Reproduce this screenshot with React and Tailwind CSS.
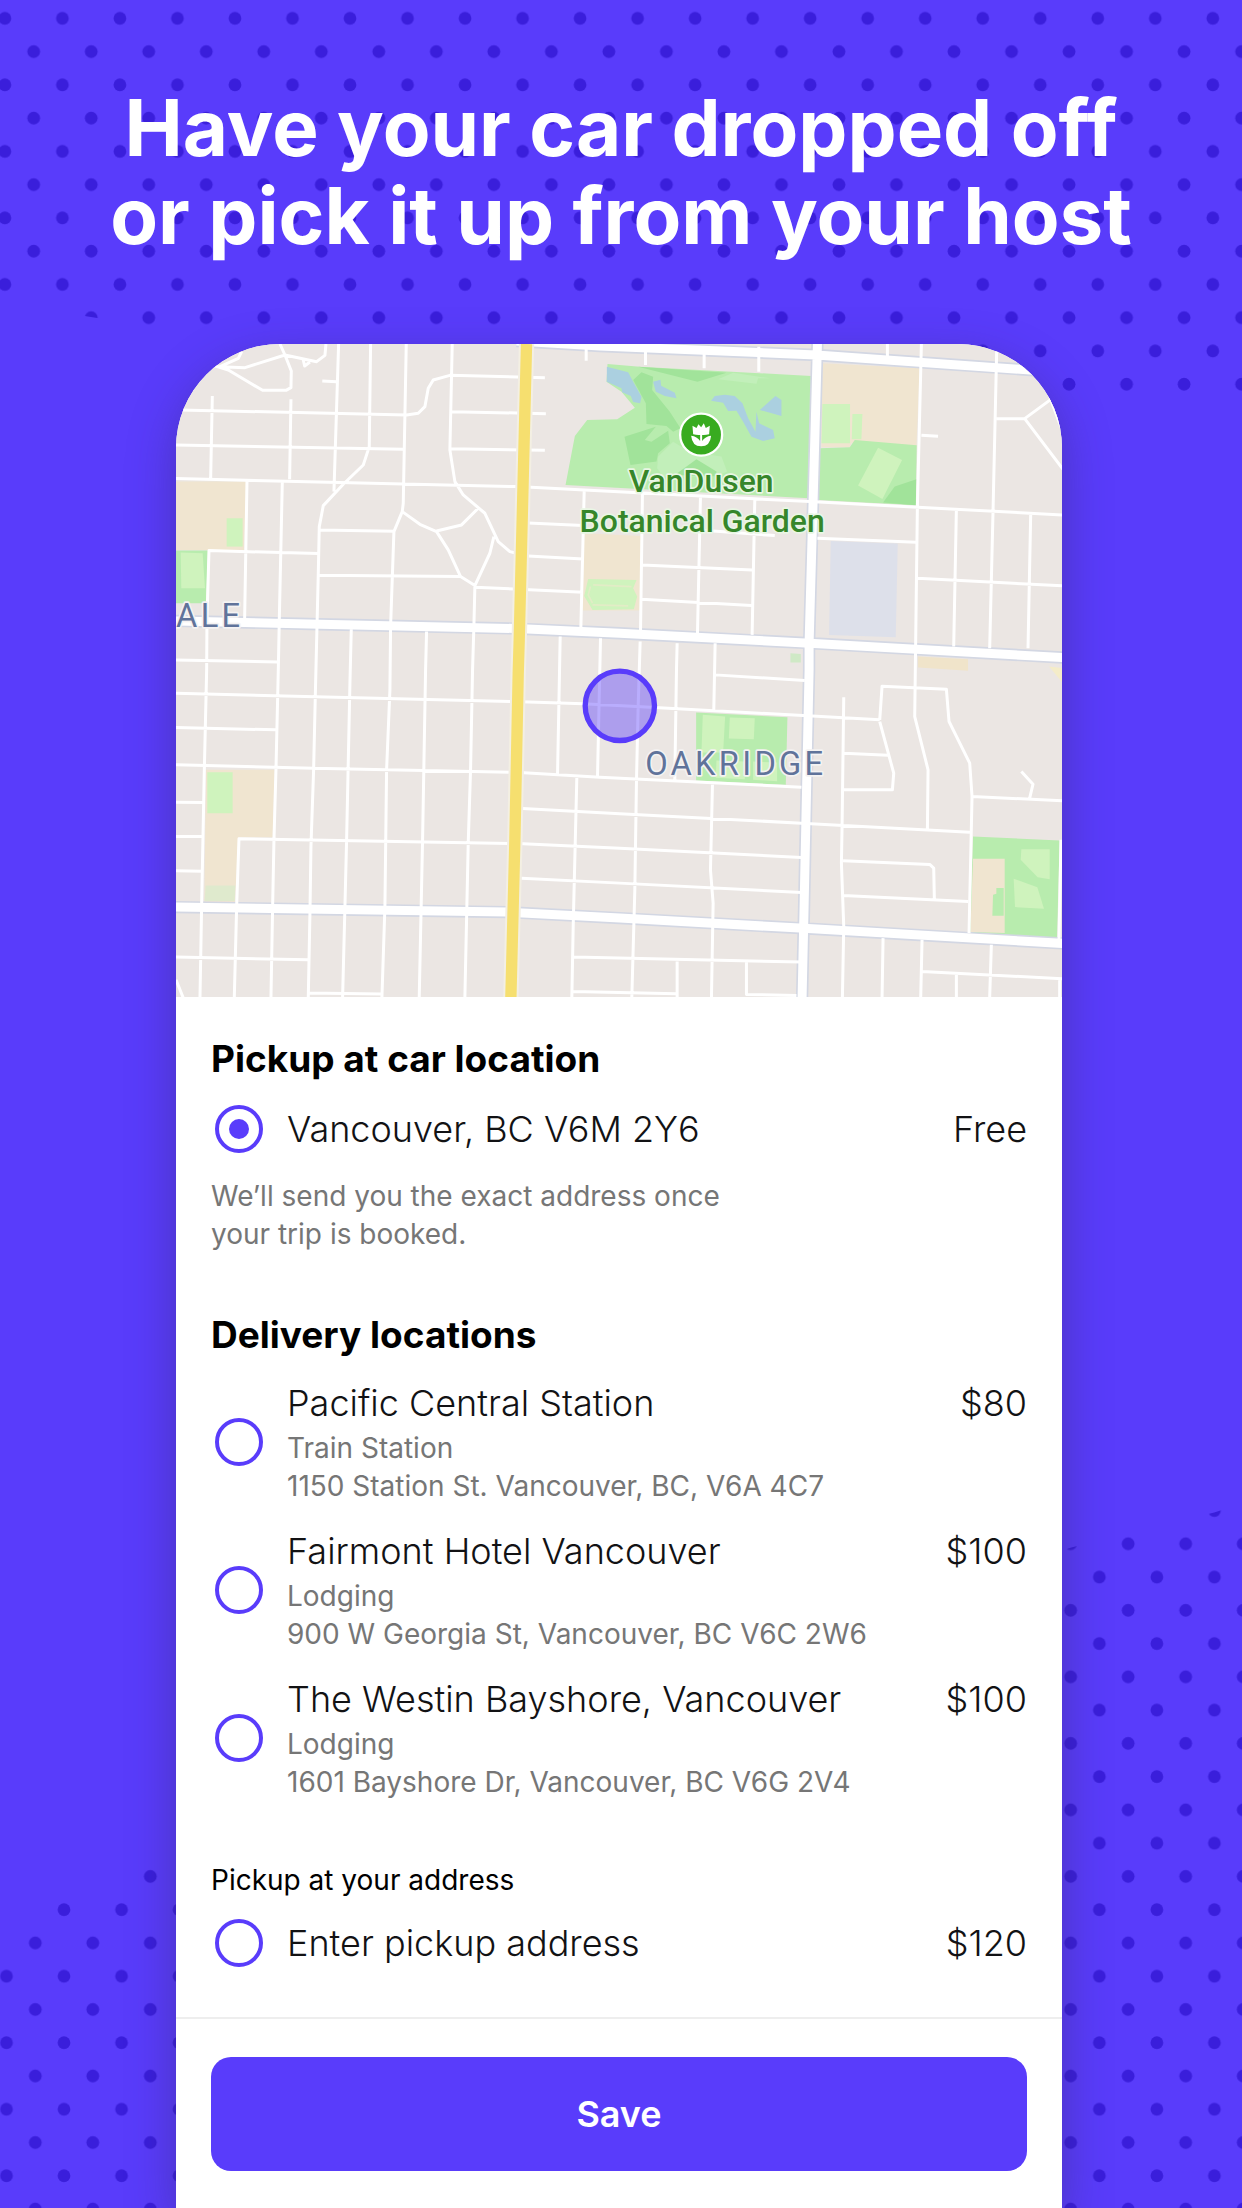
// App.jsx

import React, {useState} from 'react';

const pickup = {id: "car", name: "Vancouver, BC V6M 2Y6", price: "Free"};

const deliveries = [
    {id: "station", name: "Pacific Central Station", kind: "Train Station", address: "1150 Station St. Vancouver, BC, V6A 4C7", price: "$80"},
    {id: "fairmont", name: "Fairmont Hotel Vancouver", kind: "Lodging", address: "900 W Georgia St, Vancouver, BC V6C 2W6", price: "$100"},
    {id: "westin", name: "The Westin Bayshore, Vancouver", kind: "Lodging", address: "1601 Bayshore Dr, Vancouver, BC V6G 2V4", price: "$100"},
];

const custom = {id: "custom", name: "Enter pickup address", price: "$120"};

// side streets, west of the yellow highway first
const streets = [
    "M215 35L205 55L150 80L225 83L345 45L364 93L363 143L348 151L278 151L175 90L130 76",
    "M330 12L345 45L440 65L465 46L468 12",
    "M400 60L404 78L420 66",
    "M457 123L500 125",
    "M30 210L710 225L745 220L765 200L775 145L790 120L840 106L1125 113",
    "M845 215L1128 221",
    "M840 326L1125 331",
    "M18 315L700 328",
    "M18 416L1040 440L1390 458L1920 485L2680 525",
    "M127 168L122 415",
    "M363 178L359 418",
    "M506 12L492 455",
    "M602 12L598 320L580 375L520 433L460 497L448 560L445 700L436 1070L431 1290L423 1520L420 1720L415 1972",
    "M709 12L700 490L697 515L672 575L662 860L660 1050L650 1290L645 1700L636 1972",
    "M847 12L840 330L855 425L880 465L945 520L985 605L1020 635L1040 640",
    "M697 515L750 553L800 575L835 630L872 710L915 737L912 860L908 990L902 1290L895 1510L885 1972",
    "M800 573L875 555L925 505",
    "M972 590L960 640L915 737",
    "M915 742L1240 757",
    "M231 425L224 835",
    "M337 428L328 840L325 990L318 1290L312 1500L308 1700L303 1972",
    "M445 641L117 632L111 835L110 990L103 1290L95 1690L90 1972",
    "M448 570L675 574",
    "M448 706L872 710",
    "M18 960L325 966",
    "M544 868L540 1030L530 1500L525 1700L518 1972",
    "M770 875L767 990L758 1500L748 1972",
    "M18 1060L1030 1085L1240 1092L1400 1100L1900 1127L2130 1140",
    "M18 1163L318 1170",
    "M18 1275L430 1285L1050 1298L1290 1312L1895 1342",
    "M18 1387L97 1388",
    "M18 1490L97 1490",
    "M18 1593L95 1594",
    "M193 1972L200 1700L207 1497L1060 1512L1350 1525L1895 1553",
    "M18 1852L415 1860",
    "M415 1960L635 1963",
    "M18 1920L40 1975",
    "M1075 549L1240 557",
    "M1075 648L1240 657",
    "M1243 455L1233 865",
    "M1249 12V62",
    "M1418 455L1412 880",
    "M1592 470L1583 880",
    "M1755 480L1747 885",
    "M1418 675L1747 690",
    "M1415 778L1745 797",
    "M1590 570L1815 587",
    "M1171 890L1163 1305",
    "M1292 895L1283 1310",
    "M1411 905L1405 1100L1400 1320L1395 1650L1386 1972",
    "M1522 910L1520 990L1515 1320",
    "M1636 910L1632 1110",
    "M1636 1005L1905 1022",
    "M1058 1406L1350 1422L1895 1450L2400 1477",
    "M1055 1615L1350 1630L1895 1658",
    "M1221 1310L1210 1760L1206 1972",
    "M1212 1852L1895 1867",
    "M1210 1955L1520 1962",
    "M1628 1335L1622 1590L1630 1690L1625 1972",
    "M1522 1865V1972",
    "M1730 1868V1964L1880 1967",
    "M2022 1072L2017 1460L2015 1570L2022 1760L2018 1972",
    "M2130 1140L2137 1039L2330 1048L2338 1145L2400 1270L2407 1370L2398 1780",
    "M2130 1145L2172 1300L2168 1350L2022 1350",
    "M2022 1240L2155 1246",
    "M2255 12L2243 500L2235 1130L2275 1290L2273 1475",
    "M2020 1563L2280 1574L2292 1585L2294 1680",
    "M2020 1667L2395 1685",
    "M2407 1370L2680 1383",
    "M2555 1295L2590 1333L2580 1375",
    "M2674 1500L2668 1800",
    "M2140 1795L2137 1972",
    "M2257 1800L2253 1972",
    "M2465 1815L2460 1972",
    "M2257 1895L2680 1917",
    "M2360 1900V1972",
    "M2670 1917V1972",
    "M1427 20V75",
    "M1603 20V85",
    "M1767 20V95",
    "M2153 12V50",
    "M2481 30L2470 515L2460 925",
    "M2481 236L2565 236L2655 170",
    "M2565 236L2680 388",
    "M2255 286L2305 289",
    "M2360 510L2352 920",
    "M2583 525L2575 925",
    "M1943 595L2240 607",
    "M2243 715L2680 738",
].join("");

const avenues = "M1040 3L1290 18L1940 45L2680 97M18 843L450 853L1040 866L1350 880L1920 910L2680 953"
    + "M18 1702L1010 1717L1350 1735L1890 1765L2680 1811M1943 12L1930 485L1918 910L1918 990L1903 1700L1897 1972";

const highway = "M1070 12L1048 900L1045 1000L1035 1500L1023 1972";


function Backdrop() {
    return (
        <svg className="absolute inset-0 -z-10 size-full" viewBox="0 0 1242 2208" preserveAspectRatio="xMidYMid slice" aria-hidden="true">
            <defs>
                <pattern id="dotsTop" patternUnits="userSpaceOnUse" x="-23.6" y="1.7" width="57.5" height="66.5">
                    <circle cx="28.7" cy="16.6" r="6.4" fill="#3a1edb"/>
                    <circle cx="0" cy="49.9" r="6.4" fill="#3a1edb"/>
                    <circle cx="57.5" cy="49.9" r="6.4" fill="#3a1edb"/>
                </pattern>
                <pattern id="dotsBottom" patternUnits="userSpaceOnUse" x="35.5" y="1892.4" width="57.5" height="66.5">
                    <circle cx="28.7" cy="16.6" r="6.4" fill="#3a1edb"/>
                    <circle cx="0" cy="49.9" r="6.4" fill="#3a1edb"/>
                    <circle cx="57.5" cy="49.9" r="6.4" fill="#3a1edb"/>
                </pattern>
            </defs>
            <path d="M0 0H1242V409Q600 398 91 317L0 302Z" fill="url(#dotsTop)"/>
            <path d="M0 1930L58 1901L142 1868L1071 1547L1214 1512L1242 1503V2208H0Z" fill="url(#dotsBottom)"/>
        </svg>
    );
}


function NeighbourhoodMap() {
    return (
        <svg className="block w-full" viewBox="18 12 2659 1959" role="img" aria-label="Map of Oakridge, Vancouver">
            <rect x="18" y="12" width="2659" height="1960" fill="#ebe6e3"/>

            {/* school grounds */}
            <g fill="#f0e5d0">
                <path d="M18 425H230L222 630H18Z"/>
                <path d="M108 1290H314L308 1492H205L195 1690H103Z"/>
                <path d="M1243 580L1415 588L1410 812H1238Z"/>
                <path d="M1955 70L2250 85L2240 320L2045 310L2040 322H1955Z"/>
                <path d="M2245 950L2395 958V993L2245 983Z" fill="#f0e4ca"/>
                <path d="M2638 980L2680 985V1030Z" fill="#f4ecc9"/>
            </g>
            <path d="M1983 603L2184 611L2178 892L1978 885Z" fill="#dde0ea"/>

            {/* parks */}
            <g fill="#b8ecae">
                <path d="M18 632H114L108 790H18Z"/>
                <path d="M1313 72L1410 80L1925 108L1918 475L1187 435L1215 288L1252 240L1342 238L1395 203L1355 155L1310 125Z"/>
                <path d="M1950 325L2040 322L2055 300L2241 316L2238 496L1945 480Z"/>
                <path d="M1862 940L1893 942V968H1862Z" fill="#cfe9c6"/>
                <path d="M1579 1118L1853 1132L1848 1335L1579 1322Z"/>
                <path d="M2410 1490L2670 1502L2662 1797L2400 1782Z"/>
            </g>
            <path d="M2410 1557H2505V1780L2402 1777Z" fill="#f0e5d0"/>
            <path d="M2470 1665L2480 1662V1645H2502V1728H2468Z" fill="#b8ecae"/>
            <path d="M107 1637H196L194 1684H104Z" fill="#dfeacd"/>
            <g fill="#cff3bd">
                <path d="M170 535H218V620H170Z"/>
                <path d="M32 638L98 640L105 745H34Z"/>
                <path d="M112 1297H188V1420H112Z"/>
                <path d="M1255 717L1400 720L1390 745L1402 770L1392 808L1268 810L1243 768Z"/>
                <path d="M1958 192H2041V310H1955Z"/>
                <path d="M2048 222H2078L2075 298H2046Z"/>
                <path d="M2125 323L2197 360L2138 477L2065 437Z"/>
                <path d="M1599 1125L1666 1130L1660 1238H1595Z"/>
                <path d="M1680 1133L1755 1135L1752 1198L1677 1196Z"/>
                <path d="M1640 1262L1725 1265V1318L1638 1314Z"/>
                <path d="M1750 1265L1822 1268V1324L1750 1320Z"/>
                <path d="M2555 1528H2640V1618L2604 1612L2553 1560Z"/>
                <path d="M2532 1617L2603 1642L2623 1707L2536 1702Z"/>
            </g>
            <path d="M1270 735L1385 740M1268 795L1375 798M1262 740L1255 765L1268 790" fill="none" stroke="#e2ecc6" strokeWidth="5"/>
            <g fill="#a1e39a">
                <path d="M1390 120L1415 97L1450 110L1447 150L1500 215L1532 265L1510 275L1490 258L1430 252L1428 190Z"/>
                <path d="M1405 80L1670 98L1583 125Z"/>
                <path d="M1364 290L1458 260L1425 300L1445 305L1495 272L1500 310L1465 340L1460 365L1382 375Z"/>
                <path d="M2140 488L2175 440L2240 418L2238 496Z"/>
            </g>
            <g fill="#c2efba">
                <path d="M1645 118L1690 98L1800 115L1765 115L1760 131Z"/>
                <path d="M1465 350L1510 305L1560 335L1655 350L1672 395L1640 410H1480L1462 385Z"/>
            </g>
            <path d="M1515 405L1580 358L1640 395V410Z" fill="#a1e39a"/>

            {/* ponds */}
            <g fill="#abd0e0">
                <path d="M1311 80L1375 97L1390 125L1415 170L1411 190L1390 186L1383 168L1357 157L1355 145L1311 125Z"/>
                <path d="M1450 125L1472 119L1474 137L1515 158L1520 175L1485 168L1458 155Z"/>
                <path d="M1624 182L1635 168L1665 164L1695 168L1718 190L1735 235L1757 275L1760 215L1768 250L1810 270L1815 295L1780 303L1745 290L1720 245L1700 212L1675 213L1660 188Z"/>
                <path d="M1770 210L1817 168L1835 180V228Z"/>
            </g>

            <g fill="none" strokeLinejoin="round">
                <path d={avenues} stroke="#d3d7e3" strokeWidth="37"/>
                <path d={streets} stroke="#fff" strokeWidth="9"/>
                <path d={avenues} stroke="#fff" strokeWidth="27"/>
                <path d="M2628 130L2650 190L2680 270" stroke="#fff" strokeWidth="14"/>
                <path d={highway} stroke="#f3efe3" strokeWidth="46"/>
                <path d={highway} stroke="#f6df6f" strokeWidth="34"/>
            </g>

            {/* botanical garden marker */}
            <circle cx="1594" cy="284" r="63" fill="#38ab20" stroke="#fff" strokeWidth="7"/>
            <g fill="#fff">
                <path d="M1568 257L1580 264L1586 253L1594 262L1602 250L1608 264L1620 257L1618 283Q1606 286 1597 285V303Q1606 289 1624 287Q1621 319 1594 319Q1567 319 1564 287Q1582 289 1591 303V285Q1582 286 1570 283Z"/>
            </g>

            <g className="font-[Roboto,sans-serif] [paint-order:stroke]" strokeLinejoin="round">
                <g className="font-medium" fontSize="96" textAnchor="middle" fill="#36862a" stroke="#e9f6e4" strokeWidth="10">
                    <text x="1594" y="455">VanDusen</text>
                    <text x="1597" y="577">Botanical Garden</text>
                </g>
                <g className="tracking-widest" fontSize="98" fill="#60739a" stroke="#f4f2f2" strokeWidth="10">
                    <text x="1698" y="1307" textAnchor="middle">OAKRIDGE</text>
                    <text x="220" y="862" textAnchor="end">ALE</text>
                </g>
            </g>

            <circle cx="1350" cy="1098" r="104" fill="#593cfb" fillOpacity="0.42" stroke="#593cfb" strokeWidth="16"/>
        </svg>
    );
}


function LocationOption({place, selected, onSelect}) {
    return (
        <label className="flex items-center">
            <input
                type="radio"
                name="location"
                className="ml-1 grid size-12 shrink-0 appearance-none place-content-center rounded-full border-4 border-[#593cfb] checked:before:size-5 checked:before:rounded-full checked:before:bg-[#593cfb] checked:before:content-['']"
                checked={selected === place.id}
                onChange={() => onSelect(place.id)}
            />
            <span className="ml-6 flex-1">
                <span className="flex justify-between text-4xl/12 font-light text-[#121214]">
                    <span>{place.name}</span>
                    <span>{place.price}</span>
                </span>
                {place.kind && (
                    <span className="mt-0.5 block text-[28px]/[38px] text-[#767676]">{place.kind}<br/>{place.address}</span>
                )}
            </span>
        </label>
    );
}


function App() {
    const [selected, setSelected] = useState("car");

    return (
        <div className="relative isolate flex min-h-screen flex-col bg-[#593cfb] font-[Inter,sans-serif]">
            <Backdrop/>
            <h1 className="py-21 text-center text-[78px]/[88px] font-bold text-white">
                Have your car dropped off<br/>or pick it up from your host
            </h1>
            <main className="mr-45 ml-44 flex flex-1 flex-col overflow-hidden rounded-t-[104px] bg-white shadow-[0_16px_48px_rgba(50,40,90,0.4)]">
                <NeighbourhoodMap/>
                <form className="flex flex-1 flex-col" onSubmit={(e) => e.preventDefault()}>
                    <div className="flex-1 px-[35px] pt-10 pb-12.5">
                        <h2 className="mb-6 text-[37px]/[44px] font-bold text-black">Pickup at car location</h2>
                        <LocationOption place={pickup} selected={selected} onSelect={setSelected}/>
                        <p className="mt-6 text-[28px]/[38px] text-[#767676]">
                            We’ll send you the exact address once<br/>your trip is booked.
                        </p>

                        <h2 className="mt-15 mb-5.5 text-[37px]/[44px] font-bold text-black">Delivery locations</h2>
                        <div className="flex flex-col gap-5.5">
                            {deliveries.map((place) => (
                                <LocationOption key={place.id} place={place} selected={selected} onSelect={setSelected}/>
                            ))}
                        </div>

                        <h3 className="mt-15 mb-5 text-[28px]/[38px] text-black">Pickup at your address</h3>
                        <LocationOption place={custom} selected={selected} onSelect={setSelected}/>
                    </div>
                    <div className="border-t-2 border-[#eeeeee] px-[35px] py-9.5">
                        <button type="submit" className="h-28.5 w-full rounded-[20px] bg-[#593cfb] text-4xl font-semibold text-white">
                            Save
                        </button>
                    </div>
                </form>
            </main>
        </div>
    );
}

export default App;
